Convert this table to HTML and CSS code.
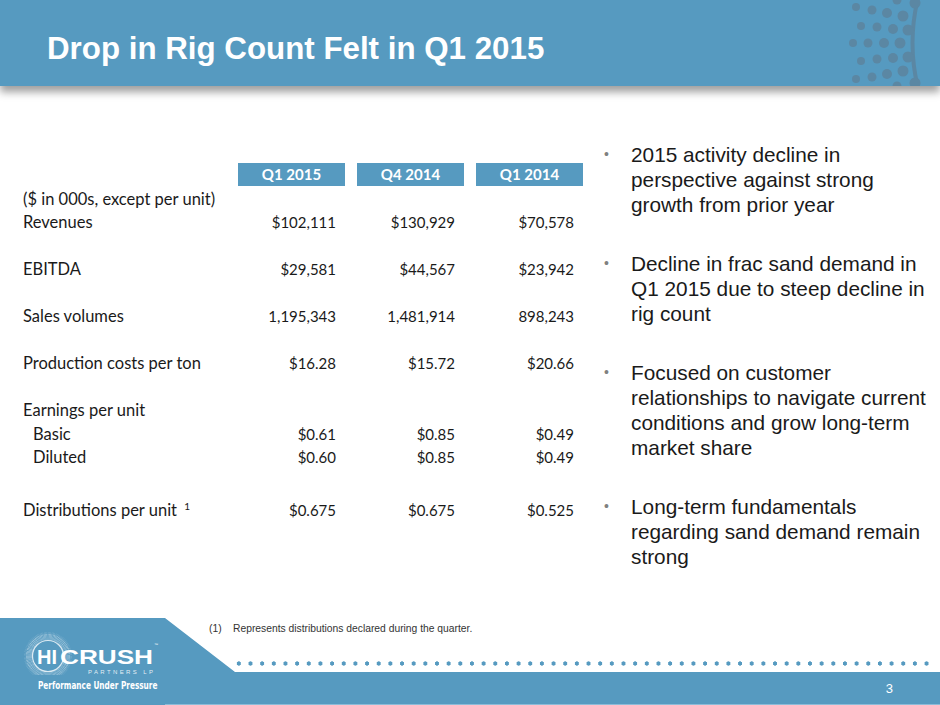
FILE: index.html
```html
<!DOCTYPE html>
<html lang="en">
<head>
<meta charset="utf-8">
<title>Drop in Rig Count Felt in Q1 2015</title>
<link rel="stylesheet" href="styles.css">
</head>
<body>
<div class="slide">
  <header class="titlebar">
    <h1 class="title">Drop in Rig Count Felt in Q1 2015</h1>
    <svg class="corner-dots" width="84" height="86" viewBox="848 0 84 86" aria-hidden="true">
      <path class="arc" d="M918,-2 Q907,43 918,88"/>
      <circle cx="856" cy="7" r="4"/><circle cx="872" cy="10" r="4.5"/><circle cx="887" cy="13" r="5"/><circle cx="903" cy="16" r="5.5"/>
      <circle cx="897" cy="0" r="4.5"/><circle cx="915" cy="3" r="5.5"/>
      <circle cx="861" cy="26" r="4"/><circle cx="877" cy="27" r="4.5"/><circle cx="893" cy="29" r="5"/><circle cx="908" cy="30" r="5.5"/>
      <circle cx="853" cy="43" r="4"/><circle cx="868" cy="43" r="4.5"/><circle cx="884" cy="43" r="5"/><circle cx="900" cy="43" r="5.5"/>
      <circle cx="861" cy="61" r="4"/><circle cx="877" cy="59" r="4.5"/><circle cx="893" cy="58" r="5"/><circle cx="908" cy="57" r="5.5"/>
      <circle cx="856" cy="79" r="4"/><circle cx="872" cy="77" r="4.5"/><circle cx="887" cy="74" r="5"/><circle cx="903" cy="71" r="5.5"/>
      <circle cx="897" cy="86" r="4.5"/><circle cx="915" cy="83" r="5.5"/>
    </svg>
  </header>

  <main class="content">
    <section class="fin">
      <div class="row head">
        <div></div>
        <div class="qhead">Q1 2015</div>
        <div class="qhead">Q4 2014</div>
        <div class="qhead">Q1 2014</div>
      </div>
      <div class="row"><div class="label">($ in 000s, except per unit)</div><div></div><div></div><div></div></div>
      <div class="row spaced"><div class="label">Revenues</div><div class="val">$102,111</div><div class="val">$130,929</div><div class="val">$70,578</div></div>
      <div class="row spaced"><div class="label">EBITDA</div><div class="val">$29,581</div><div class="val">$44,567</div><div class="val">$23,942</div></div>
      <div class="row spaced"><div class="label">Sales volumes</div><div class="val">1,195,343</div><div class="val">1,481,914</div><div class="val">898,243</div></div>
      <div class="row spaced"><div class="label">Production costs per ton</div><div class="val">$16.28</div><div class="val">$15.72</div><div class="val">$20.66</div></div>
      <div class="row"><div class="label">Earnings per unit</div><div></div><div></div><div></div></div>
      <div class="row"><div class="label sub">Basic</div><div class="val">$0.61</div><div class="val">$0.85</div><div class="val">$0.49</div></div>
      <div class="row wide"><div class="label sub">Diluted</div><div class="val">$0.60</div><div class="val">$0.85</div><div class="val">$0.49</div></div>
      <div class="row"><div class="label">Distributions per unit <sup class="note">1</sup></div><div class="val">$0.675</div><div class="val">$0.675</div><div class="val">$0.525</div></div>
    </section>

    <ul class="points">
      <li><span class="dot">&#8226;</span><span class="txt">2015 activity decline in perspective against strong growth from prior year</span></li>
      <li><span class="dot">&#8226;</span><span class="txt">Decline in frac sand demand in Q1 2015 due to steep decline in rig count</span></li>
      <li><span class="dot">&#8226;</span><span class="txt">Focused on customer relationships to navigate current conditions and grow long-term market share</span></li>
      <li><span class="dot">&#8226;</span><span class="txt">Long-term fundamentals regarding sand demand remain strong</span></li>
    </ul>
  </main>

  <footer class="footer">
    <div class="logo">
      <svg class="logo-mark" width="150" height="50" viewBox="0 0 150 50" aria-label="Hi-Crush Partners LP">
        <circle class="ring-rays" cx="33" cy="31" r="19"/>
        <circle class="ring-rays2" cx="33" cy="31" r="22.5"/>
        <circle class="ring-line" cx="33" cy="31" r="15.5"/>
        <text class="logo-main" x="22" y="39" textLength="20" lengthAdjust="spacingAndGlyphs">HI</text>
        <text class="logo-main" x="45" y="39" textLength="93" lengthAdjust="spacingAndGlyphs">CRUSH</text>
        <text class="logo-tm" x="139" y="21">&#8482;</text>
        <text class="logo-sub" x="73" y="48.5" textLength="65" lengthAdjust="spacing">PARTNERS LP</text>
      </svg>
      <p class="logo-tag">Performance Under Pressure</p>
    </div>
    <div class="foot-right">
      <p class="footnote"><span class="fn-num">(1)</span>Represents distributions declared during the quarter.</p>
      <div class="dotline"></div>
      <div class="pagebar"><span class="pagenum">3</span></div>
    </div>
  </footer>
</div>
</body>
</html>
```

FILE: styles.css
```css
* {
  box-sizing: border-box;
  margin: 0;
  padding: 0;
}

body {
  width: 940px;
  height: 705px;
  overflow: hidden;
  background: #ffffff;
  font-family: "Liberation Sans", Arial, sans-serif;
}

.slide {
  width: 940px;
  height: 705px;
  display: flex;
  flex-direction: column;
}

/* ---------- title bar ---------- */
.titlebar {
  height: 86px;
  flex: none;
  background: #569ac0;
  display: flex;
  justify-content: space-between;
  padding: 0 8px 0 47px;
  box-shadow: 0 6px 8px rgba(0, 0, 0, 0.38);
  position: relative;
  z-index: 1;
}

.title {
  padding-top: 31px;
  font-size: 31.3px;
  line-height: 36px;
  font-weight: 700;
  color: #ffffff;
}

.corner-dots {
  display: block;
  flex: none;
}

.corner-dots circle {
  fill: #5b87a3;
}

.corner-dots .arc {
  fill: none;
  stroke: #5b87a3;
  stroke-width: 4;
}

/* ---------- content ---------- */
.content {
  flex: 1;
  display: flex;
  padding-left: 23px;
}

.fin {
  width: 560px;
  margin-top: 77px;
  font-family: Lato, "Open Sans", sans-serif;
  font-size: 15px;
  color: #1a1a1a;
}

.row {
  display: grid;
  grid-template-columns: 203px 107px 107px 107px;
  column-gap: 12px;
  height: 23.5px;
  line-height: 23.5px;
  white-space: nowrap;
}

.row.head {
  height: 24.5px;
}

.row.spaced {
  margin-bottom: 23.5px;
}

.row.wide {
  margin-bottom: 29.75px;
}

.qhead {
  height: 23px;
  line-height: 23px;
  background: #569ac0;
  color: #ffffff;
  font-weight: 700;
  text-align: center;
}

.label {
  font-size: 16.5px;
}

.label.sub {
  padding-left: 10px;
}

.val {
  text-align: right;
  padding-right: 9px;
}

.note {
  font-size: 10px;
  vertical-align: 6px;
  line-height: 0;
  margin-left: 3px;
}

.points {
  list-style: none;
  margin: 56px 0 0 21px;
  width: 330px;
}

.points li {
  display: flex;
  font-size: 20.8px;
  line-height: 25px;
  color: #1a1a1a;
  margin-bottom: 34px;
}

.points .dot {
  flex: none;
  width: 27px;
  color: #808080;
  font-size: 14px;
}

.points .txt {
  width: 302px;
}

/* ---------- footer ---------- */
.footer {
  height: 87px;
  flex: none;
  display: flex;
  position: relative;
  isolation: isolate;
}

.footer::before {
  content: "";
  position: absolute;
  inset: 0;
  z-index: -1;
  background: #569ac0;
  clip-path: polygon(0 0, 165px 0, 235px 54px, 100% 54px, 100% 100%, 0 100%);
}

.logo {
  flex: none;
  width: 150px;
  margin: 7px 0 0 15px;
  display: flex;
  flex-direction: column;
}

.logo-mark {
  display: block;
}

.ring-rays {
  fill: none;
  stroke: #ffffff;
  stroke-opacity: 0.55;
  stroke-width: 6;
  stroke-dasharray: 0.45 0.75;
}

.ring-rays2 {
  fill: none;
  stroke: #ffffff;
  stroke-opacity: 0.25;
  stroke-width: 3;
  stroke-dasharray: 0.4 0.9;
}

.ring-line {
  fill: none;
  stroke: #ffffff;
  stroke-opacity: 0.8;
  stroke-width: 1.2;
}

.logo-main {
  font-family: "Liberation Sans", Arial, sans-serif;
  font-weight: 700;
  font-size: 21px;
  fill: #ffffff;
}

.logo-tm {
  font-family: "Liberation Sans", Arial, sans-serif;
  font-size: 4px;
  fill: #ffffff;
}

.logo-sub {
  font-family: "Liberation Sans", Arial, sans-serif;
  font-size: 6px;
  fill: #ffffff;
  fill-opacity: 0.85;
}

.logo-tag {
  margin: 4px 0 0 23px;
  font-family: "DejaVu Sans Condensed", "DejaVu Sans", sans-serif;
  font-weight: 700;
  font-size: 11px;
  line-height: 13px;
  color: #ffffff;
  white-space: nowrap;
  transform: scaleX(0.74);
  transform-origin: left center;
}

.foot-right {
  flex: 1;
  display: flex;
  flex-direction: column;
  padding-left: 44px;
}

.footnote {
  margin-top: 5px;
  font-size: 10.3px;
  line-height: 12px;
  color: #333333;
  white-space: nowrap;
}

.fn-num {
  display: inline-block;
  width: 24px;
}

.dotline {
  margin: 26px 0 0 24px;
  width: 700px;
  height: 5px;
  background-image: radial-gradient(circle, #569ac0 1.9px, rgba(86, 154, 192, 0) 2.4px);
  background-size: 11.667px 5px;
}

.pagebar {
  margin-top: 7px;
  margin-left: -44px;
  height: 33px;
  display: flex;
  justify-content: flex-end;
  align-items: center;
  padding-right: 47px;
  border-bottom: 1px solid #8cbcd8;
}

.pagenum {
  font-size: 13px;
  color: #ffffff;
}
```
